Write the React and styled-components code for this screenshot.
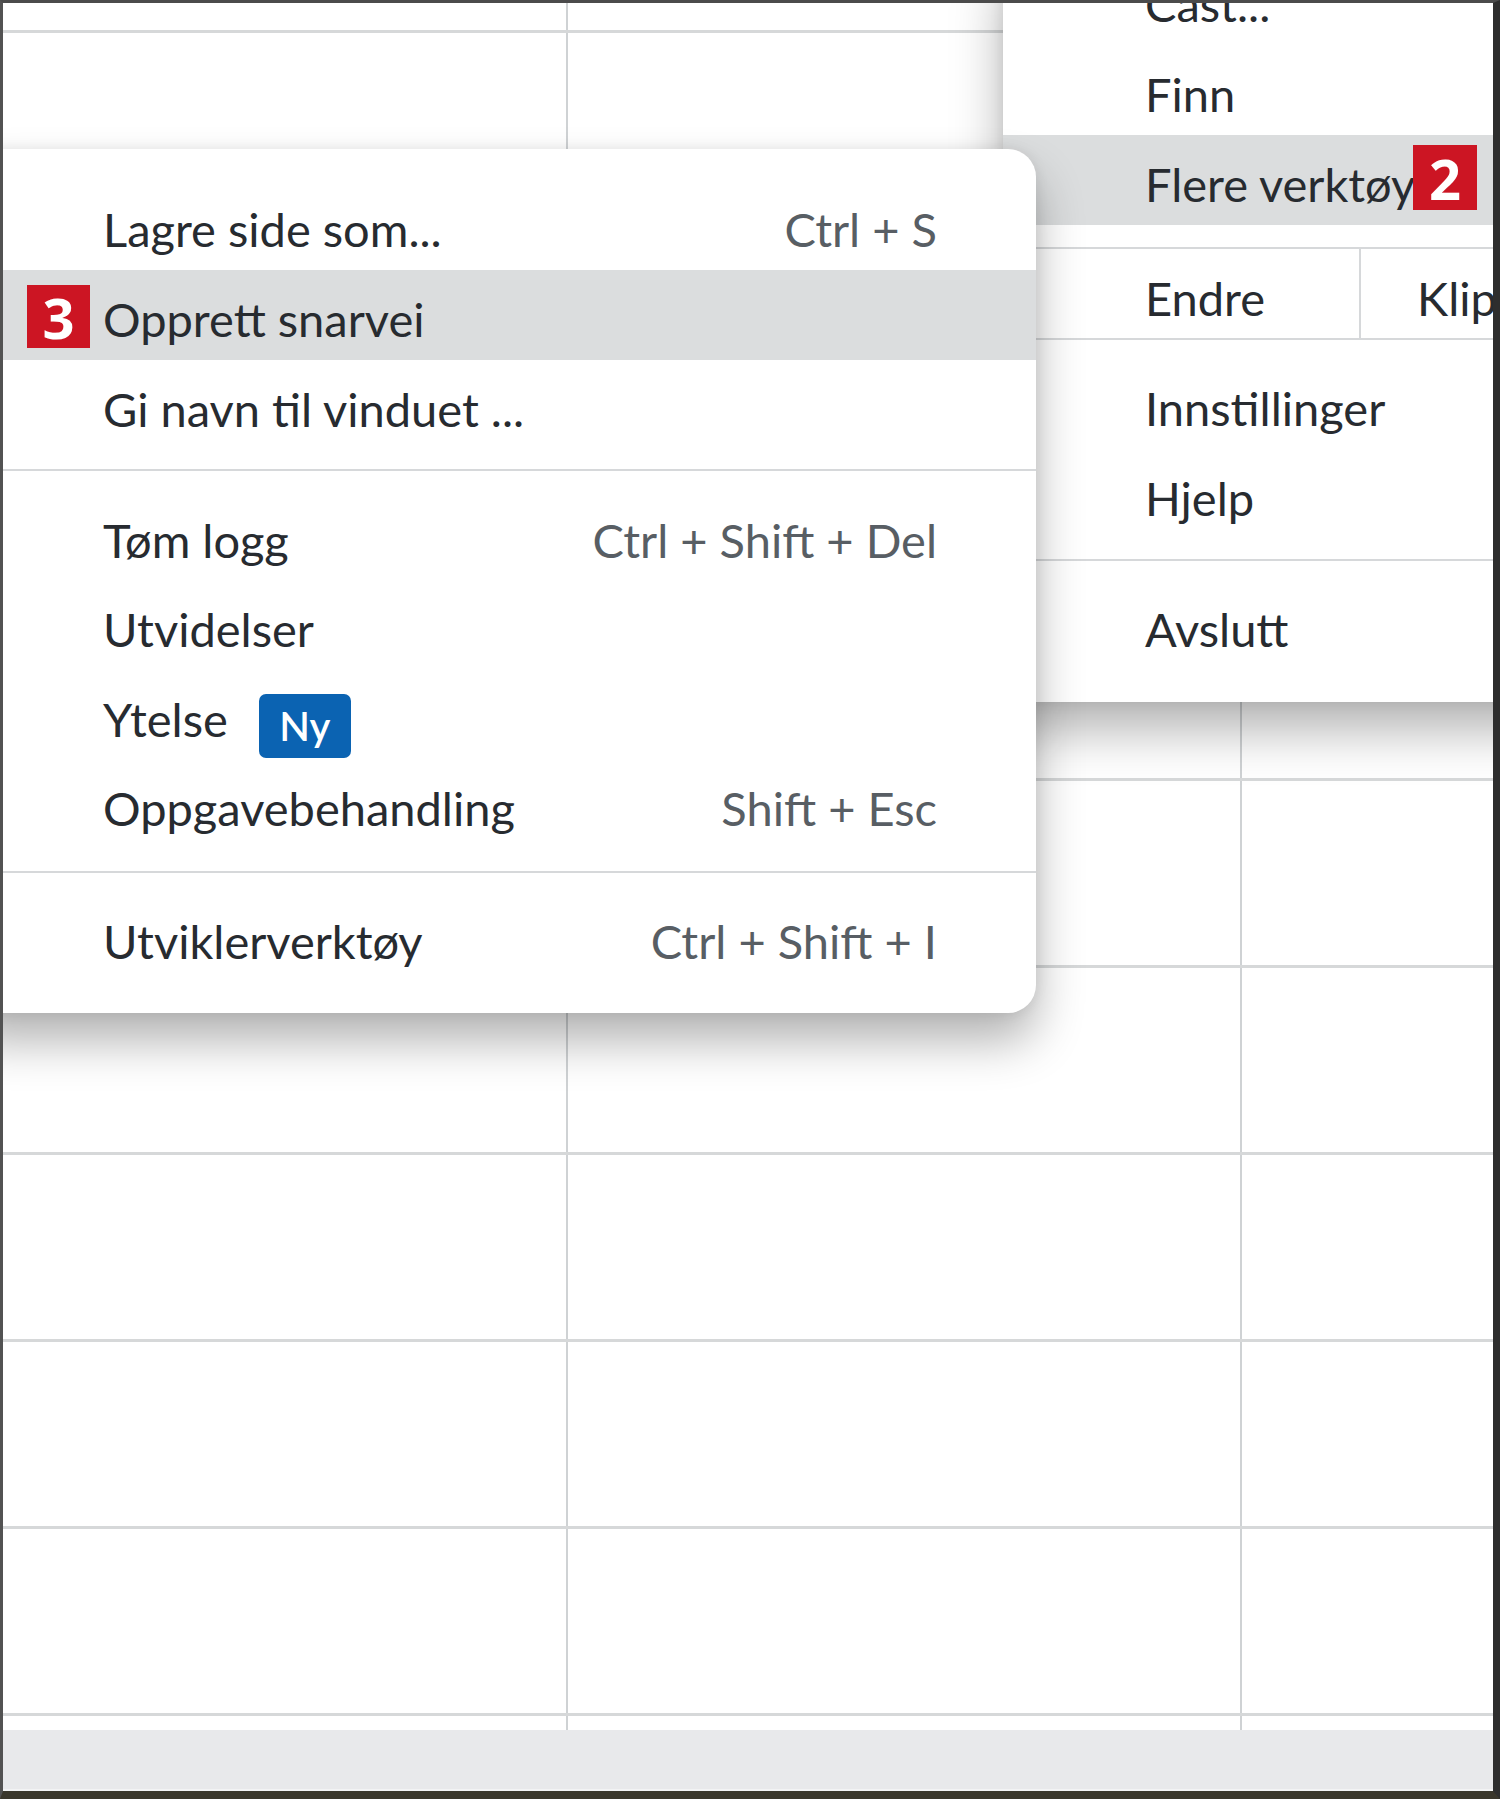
import React from "react";
import styled, { createGlobalStyle } from "styled-components";

const GlobalStyle = createGlobalStyle`
  *, *::before, *::after { box-sizing: border-box; }
  html, body { margin: 0; padding: 0; background: #fff; }
  body { font-family: Lato, "Liberation Sans", sans-serif; }
`;

const Frame = styled.div`
  position: relative;
  width: 1500px;
  height: 1799px;
  border-style: solid;
  border-width: 3px 7px 8px 3px;
  border-color: #4b4b4b #2e2e2e #3a372c #525252;
  overflow: hidden;
  background: #fff;
`;

const Sheet = styled.div`
  display: flex;
  flex-direction: column;
  height: 100%;
`;

const SheetRow = styled.div`
  display: flex;
  flex: ${(p) => (p.$grow ? 1 : "none")};
  height: ${(p) => (p.$grow ? "auto" : `${p.$h}px`)};
  border-top: ${(p) => (p.$first ? "none" : "3px solid #d6d8d9")};
`;

const Cell = styled.div`
  flex: ${(p) => (p.$w ? "none" : 1)};
  width: ${(p) => (p.$w ? `${p.$w}px` : "auto")};
  border-right: ${(p) => (p.$w ? "2px solid #cfd2d4" : "none")};
`;

const StatusBar = styled.div`
  height: 61px;
  flex: none;
  background: #e8e9eb;
  border-bottom: 2px solid #f2f3f4;
`;

const Menu = styled.div`
  position: absolute;
  left: ${(p) => p.$left}px;
  top: ${(p) => p.$top}px;
  width: ${(p) => p.$width}px;
  padding: ${(p) => p.$pad};
  background: #fff;
  border-radius: ${(p) => p.$radius || 0}px;
  box-shadow: 0 28px 48px rgba(0, 0, 0, 0.3), 0 0 14px rgba(0, 0, 0, 0.08);
  z-index: ${(p) => p.$z};
`;

const Item = styled.div`
  position: relative;
  display: flex;
  align-items: center;
  justify-content: space-between;
  height: ${(p) => p.$h || 90}px;
  padding: 8px ${(p) => p.$right || 0}px 0 ${(p) => p.$left}px;
  background: ${(p) => (p.$active ? "#dbddde" : "transparent")};
  font-size: 47px;
  color: #272b30;
  white-space: nowrap;
`;

const Label = styled.span`
  display: inline-flex;
  align-items: center;
`;

const Shortcut = styled.span`
  color: #585e64;
`;

const Separator = styled.div`
  height: 2px;
  margin: ${(p) => p.$top}px 0 ${(p) => p.$bottom}px;
  background: #d6d8da;
`;

const EditRow = styled.div`
  display: flex;
  height: 93px;
  margin: 22px 0 19px;
  border-top: 2px solid #d6d8da;
  border-bottom: 2px solid #d6d8da;
  font-size: 47px;
  color: #272b30;
  white-space: nowrap;
`;

const EditCell = styled.div`
  display: flex;
  align-items: center;
  padding-top: 8px;
  flex: none;
  width: ${(p) => (p.$w ? `${p.$w}px` : "auto")};
  padding-left: ${(p) => p.$left}px;
  border-left: ${(p) => (p.$divider ? "2px solid #d6d8da" : "none")};
`;

const StepBadge = styled.div`
  position: absolute;
  left: ${(p) => p.$x}px;
  top: ${(p) => p.$y}px;
  width: ${(p) => p.$w}px;
  height: ${(p) => p.$h}px;
  display: flex;
  align-items: center;
  justify-content: center;
  background: #cc1523;
  color: #fff;
  font-family: "Open Sans", "Liberation Sans", sans-serif;
  font-weight: 700;
  font-size: 56px;
  line-height: 1;
  z-index: 1;
`;

const NewBadge = styled.span`
  display: inline-flex;
  align-items: center;
  justify-content: center;
  width: 92px;
  height: 64px;
  margin: 14px 0 0 31px;
  border-radius: 7px;
  background: #0b63b2;
  color: #fff;
  font-size: 40px;
  font-weight: 600;
  line-height: 1;
`;

const gridRows = Array.from({ length: 9 });

const Spreadsheet = () => (
  <Sheet>
    <SheetRow $first $h={27}>
      <Cell $w={565} />
      <Cell $w={674} />
      <Cell />
    </SheetRow>
    {gridRows.map((_, i) => (
      <SheetRow key={i} $h={187}>
        <Cell $w={565} />
        <Cell $w={674} />
        <Cell />
      </SheetRow>
    ))}
    <SheetRow $grow>
      <Cell $w={565} />
      <Cell $w={674} />
      <Cell />
    </SheetRow>
    <StatusBar />
  </Sheet>
);

const MainMenu = () => (
  <Menu $left={1000} $top={-48} $width={620} $pad="0 0 32px" $z={1}>
    <Item $left={142}>Cast...</Item>
    <Item $left={142}>Finn</Item>
    <Item $left={142} $active>
      Flere verktøy
      <StepBadge $x={410} $y={10} $w={64} $h={65}>2</StepBadge>
    </Item>
    <EditRow>
      <EditCell $w={356} $left={142}>Endre</EditCell>
      <EditCell $divider $left={56}>Klipp ut</EditCell>
    </EditRow>
    <Item $left={142}>Innstillinger</Item>
    <Item $left={142}>Hjelp</Item>
    <Separator $top={20} $bottom={19} />
    <Item $left={142}>Avslutt</Item>
  </Menu>
);

const SubMenu = () => (
  <Menu $left={-40} $top={146} $width={1073} $pad="31px 0" $radius={28} $z={2}>
    <Item $left={140} $right={99}>
      <Label>Lagre side som...</Label>
      <Shortcut>Ctrl + S</Shortcut>
    </Item>
    <Item $left={140} $right={99} $active>
      <StepBadge $x={64} $y={15} $w={63} $h={63}>3</StepBadge>
      <Label>Opprett snarvei</Label>
    </Item>
    <Item $left={140} $right={99}>
      <Label>Gi navn til vinduet ...</Label>
    </Item>
    <Separator $top={19} $bottom={20} />
    <Item $left={140} $right={99} $h={89.5}>
      <Label>Tøm logg</Label>
      <Shortcut>Ctrl + Shift + Del</Shortcut>
    </Item>
    <Item $left={140} $right={99} $h={89.5}>
      <Label>Utvidelser</Label>
    </Item>
    <Item $left={140} $right={99} $h={89.5}>
      <Label>
        Ytelse<NewBadge>Ny</NewBadge>
      </Label>
    </Item>
    <Item $left={140} $right={99} $h={89.5}>
      <Label>Oppgavebehandling</Label>
      <Shortcut>Shift + Esc</Shortcut>
    </Item>
    <Separator $top={22} $bottom={19} />
    <Item $left={140} $right={99}>
      <Label>Utviklerverktøy</Label>
      <Shortcut>Ctrl + Shift + I</Shortcut>
    </Item>
  </Menu>
);

export default function App() {
  return (
    <>
      <GlobalStyle />
      <Frame>
        <Spreadsheet />
        <MainMenu />
        <SubMenu />
      </Frame>
    </>
  );
}
